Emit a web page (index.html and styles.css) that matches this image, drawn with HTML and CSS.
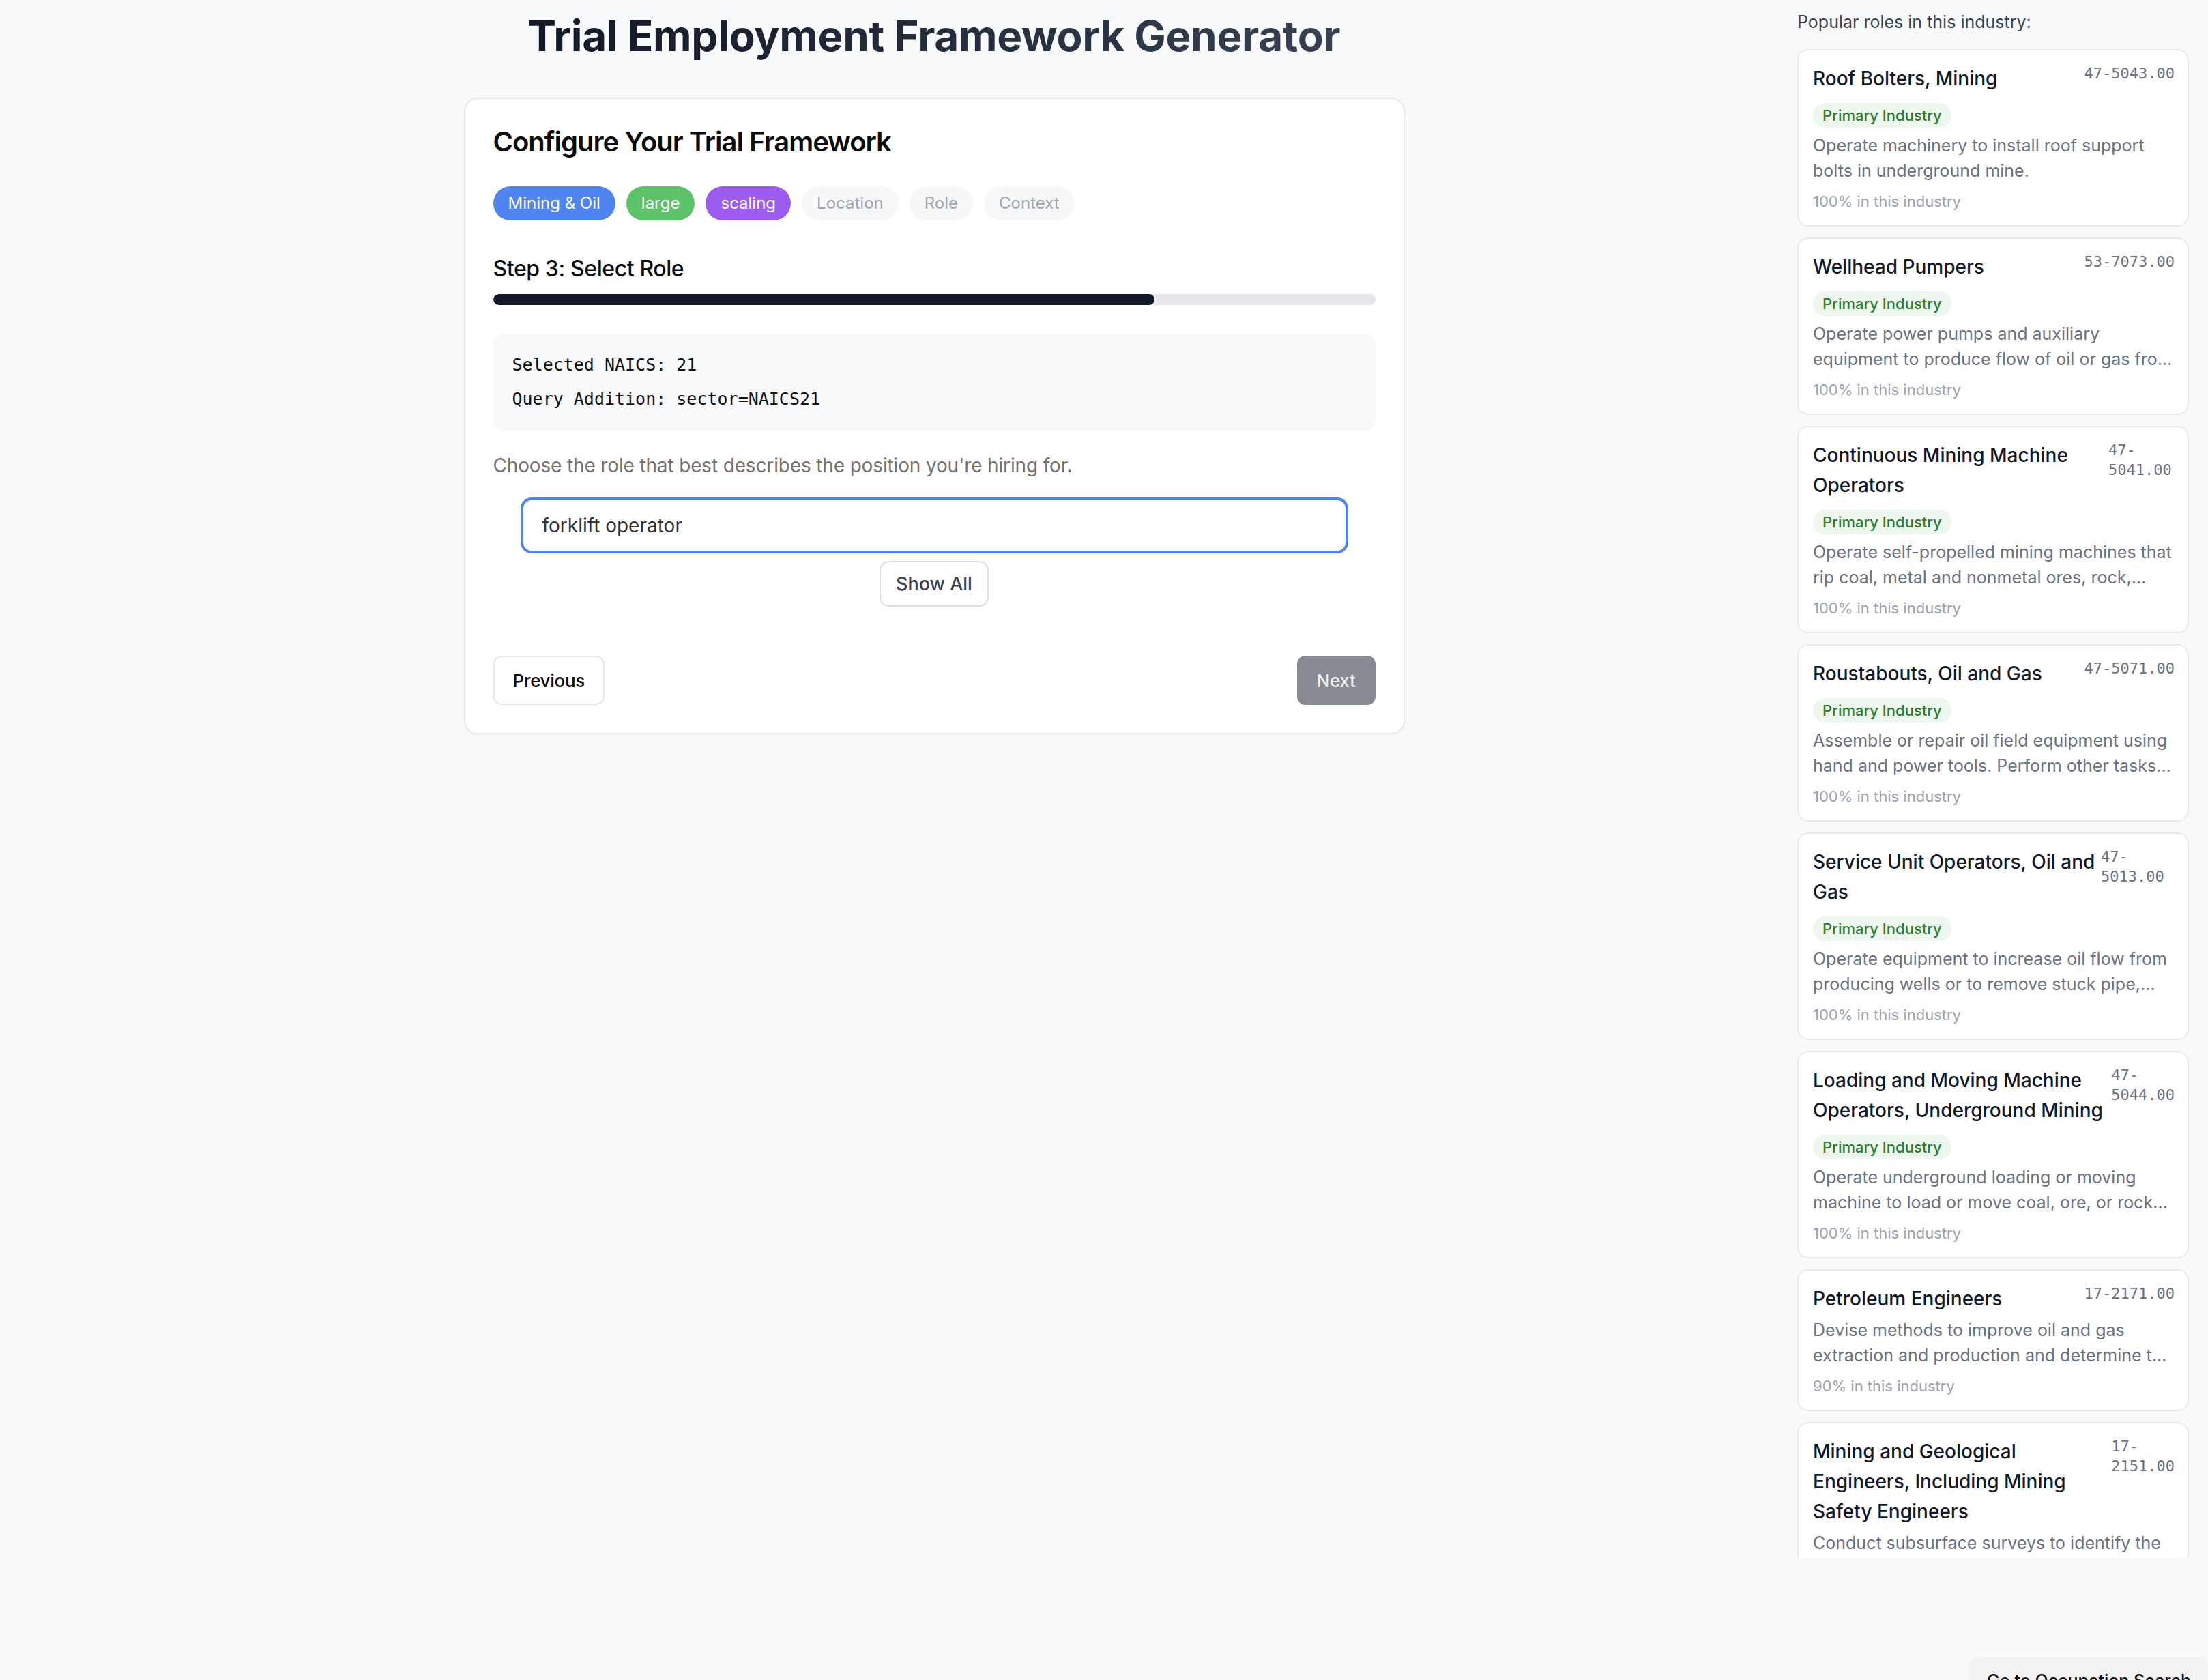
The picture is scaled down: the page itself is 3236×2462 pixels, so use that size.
FILE: index.html
```html
<!DOCTYPE html>
<html lang="en">
<head>
<meta charset="utf-8">
<title>Trial Employment Framework Generator</title>
<link rel="stylesheet" href="styles.css">
</head>
<body>
<div class="layout">
  <main class="main">
    <h1 class="page-title">Trial Employment Framework Generator</h1>
    <section class="card">
      <h2 class="card-title">Configure Your Trial Framework</h2>
      <div class="tags">
        <span class="tag tag-blue">Mining &amp; Oil</span>
        <span class="tag tag-green">large</span>
        <span class="tag tag-purple">scaling</span>
        <span class="tag tag-empty">Location</span>
        <span class="tag tag-empty">Role</span>
        <span class="tag tag-empty">Context</span>
      </div>
      <h3 class="step-title">Step 3: Select Role</h3>
      <div class="progress"><div class="progress-fill" style="width:75%"></div></div>
      <div class="info">
        <div class="info-line">Selected NAICS: 21</div>
        <div class="info-line">Query Addition: sector=NAICS21</div>
      </div>
      <p class="hint">Choose the role that best describes the position you're hiring for.</p>
      <div class="search">
        <input class="search-input" type="text" value="forklift operator">
        <button class="show-all" type="button">Show All</button>
      </div>
      <div class="nav">
        <button class="btn btn-prev" type="button">Previous</button>
        <button class="btn btn-next" type="button">Next</button>
      </div>
    </section>
  </main>
  <aside class="sidebar">
    <div class="sidebar-heading">Popular roles in this industry:</div>
    <div class="role-list">
      <div class="role-card">
        <div class="role-head"><div class="role-title">Roof Bolters, Mining</div><div class="role-code">47-5043.00</div></div>
        <span class="badge">Primary Industry</span>
        <div class="role-desc">Operate machinery to install roof support bolts in underground mine.</div>
        <div class="role-share">100% in this industry</div>
      </div>
      <div class="role-card">
        <div class="role-head"><div class="role-title">Wellhead Pumpers</div><div class="role-code">53-7073.00</div></div>
        <span class="badge">Primary Industry</span>
        <div class="role-desc">Operate power pumps and auxiliary equipment to produce flow of oil or gas from wells in oil field.</div>
        <div class="role-share">100% in this industry</div>
      </div>
      <div class="role-card">
        <div class="role-head"><div class="role-title">Continuous Mining Machine Operators</div><div class="role-code">47-5041.00</div></div>
        <span class="badge">Primary Industry</span>
        <div class="role-desc">Operate self-propelled mining machines that rip coal, metal and nonmetal ores, rock, stone, or sand from the mine face and load it onto conveyors or into shuttle cars in a continuous operation.</div>
        <div class="role-share">100% in this industry</div>
      </div>
      <div class="role-card">
        <div class="role-head"><div class="role-title">Roustabouts, Oil and Gas</div><div class="role-code">47-5071.00</div></div>
        <span class="badge">Primary Industry</span>
        <div class="role-desc">Assemble or repair oil field equipment using hand and power tools. Perform other tasks as needed during regular workday.</div>
        <div class="role-share">100% in this industry</div>
      </div>
      <div class="role-card">
        <div class="role-head"><div class="role-title">Service Unit Operators, Oil and Gas</div><div class="role-code">47-5013.00</div></div>
        <span class="badge">Primary Industry</span>
        <div class="role-desc">Operate equipment to increase oil flow from producing wells or to remove stuck pipe, casing, tools, or other obstructions from drilling wells.</div>
        <div class="role-share">100% in this industry</div>
      </div>
      <div class="role-card">
        <div class="role-head"><div class="role-title">Loading and Moving Machine Operators, Underground Mining</div><div class="role-code">47-5044.00</div></div>
        <span class="badge">Primary Industry</span>
        <div class="role-desc">Operate underground loading or moving machine to load or move coal, ore, or rock into shuttle or mine car or onto conveyors.</div>
        <div class="role-share">100% in this industry</div>
      </div>
      <div class="role-card">
        <div class="role-head"><div class="role-title">Petroleum Engineers</div><div class="role-code">17-2171.00</div></div>
        <div class="role-desc">Devise methods to improve oil and gas extraction and production and determine the need for new or modified tool designs.</div>
        <div class="role-share">90% in this industry</div>
      </div>
      <div class="role-card">
        <div class="role-head"><div class="role-title">Mining and Geological Engineers, Including Mining Safety Engineers</div><div class="role-code">17-2151.00</div></div>
        <div class="role-desc">Conduct subsurface surveys to identify the characteristics of potential land or mining development sites.</div>
        <div class="role-share">90% in this industry</div>
      </div>
    </div>
  </aside>
</div>
<button class="occupation-btn" type="button">Go to Occupation Search</button>
</body>
</html>
```
FILE: styles.css
```css
* { box-sizing: border-box; }

body {
  margin: 0;
  background: #f8f9fa;
  font-family: Inter, "Noto Sans", sans-serif;
  color: #111827;
}

.layout {
  display: flex;
  height: 2462px;
  overflow: hidden;
}

.main {
  flex: 1;
  padding: 16px 0 0 104px;
  display: flex;
  flex-direction: column;
  align-items: center;
}

.page-title {
  margin: 0;
  font-size: 62px;
  line-height: 74px;
  font-weight: 700;
  letter-spacing: -0.3px;
  background: linear-gradient(90deg, #111827 0%, #374151 100%);
  -webkit-background-clip: text;
  background-clip: text;
  color: transparent;
}

.card {
  margin-top: 53px;
  width: 1379px;
  background: #fff;
  border: 2px solid #e8e9ec;
  border-radius: 20px;
  padding: 39px 41px 41px;
  box-shadow: 0 2px 4px rgba(0, 0, 0, 0.03);
}

.card-title {
  margin: 0 0 41px;
  font-size: 40px;
  line-height: 48px;
  font-weight: 600;
  letter-spacing: -1px;
  color: #0a0a0a;
}

.tags {
  display: flex;
  gap: 16px;
  margin-bottom: 51px;
}

.tag {
  height: 50px;
  padding: 0 22px;
  border-radius: 25px;
  font-size: 24px;
  line-height: 50px;
  color: #fff;
}

.tag-blue { background: #5084ee; }
.tag-green { background: #5ec26b; }
.tag-purple { background: #9d5cee; }
.tag-empty { background: #f6f7f9; color: #a2a5ae; }

.step-title {
  margin: 0 0 17px;
  font-size: 32px;
  line-height: 40px;
  font-weight: 500;
  letter-spacing: -0.4px;
  color: #0a0a0a;
}

.progress {
  height: 16px;
  background: #e5e7eb;
  border-radius: 8px;
  overflow: hidden;
  margin-bottom: 42px;
}

.progress-fill {
  height: 100%;
  background: #111827;
  border-radius: 8px;
}

.info {
  background: #f8f9fa;
  border-radius: 16px;
  padding: 21px 28px 22px;
  font-family: "DejaVu Sans Mono", "Liberation Mono", monospace;
  font-size: 25px;
  line-height: 50px;
  color: #111;
}

.hint {
  margin: 33px 0 30px;
  font-size: 28px;
  line-height: 34px;
  letter-spacing: -0.15px;
  color: #78716c;
}

.search {
  padding: 0 40px;
  display: flex;
  flex-direction: column;
  align-items: center;
  gap: 11px;
}

.search-input {
  width: 100%;
  height: 82px;
  border: 4px solid #4f83ee;
  border-radius: 16px;
  padding: 0 28px;
  font-family: Inter, "Noto Sans", sans-serif;
  font-size: 28px;
  color: #333;
  background: #fff;
  outline: none;
}

.show-all {
  width: 160px;
  height: 67px;
  background: #fff;
  border: 2px solid #dcdde1;
  border-radius: 14px;
  font-family: Inter, "Noto Sans", sans-serif;
  font-size: 27px;
  font-weight: 500;
  color: #374151;
}

.nav {
  margin-top: 72px;
  display: flex;
  justify-content: space-between;
}

.btn {
  height: 72px;
  padding: 0 27px;
  border-radius: 12px;
  font-family: Inter, "Noto Sans", sans-serif;
  font-size: 26px;
  font-weight: 500;
  letter-spacing: -0.3px;
}

.btn-prev {
  background: #fff;
  border: 2px solid #e7e8eb;
  color: #0a0a0a;
}

.btn-next {
  background: #888a93;
  border: 2px solid #888a93;
  color: #eeeff1;
}

/* Sidebar */
.sidebar {
  width: 602px;
  flex-shrink: 0;
  padding: 14px 28px 0 0;
}

.sidebar-heading {
  font-size: 25px;
  line-height: 36px;
  color: #3b4250;
}

.role-list {
  margin-top: 22px;
  height: 2211px;
  overflow: hidden;
  display: flex;
  flex-direction: column;
  gap: 16px;
}

.role-card {
  flex-shrink: 0;
  background: #fff;
  border: 2px solid #e9eaee;
  border-radius: 16px;
  padding: 19px 19px 18px 21px;
}

.role-head {
  display: flex;
  justify-content: space-between;
  align-items: flex-start;
  gap: 4px;
  margin-bottom: 6px;
}

.role-title {
  font-size: 28px;
  line-height: 44px;
  font-weight: 500;
  color: #111827;
}

.role-code {
  flex-shrink: 1.6;
  font-family: "DejaVu Sans Mono", "Liberation Mono", monospace;
  font-size: 22px;
  line-height: 29px;
  color: #6b7280;
}

.badge {
  display: inline-block;
  margin: 8px 0 8px;
  height: 36px;
  padding: 0 14px;
  border-radius: 18px;
  background: #edf7ee;
  color: #2e7d32;
  font-size: 22px;
  line-height: 36px;
  font-weight: 500;
}

.role-desc {
  font-size: 25px;
  line-height: 36.5px;
  color: #6b7280;
  display: -webkit-box;
  -webkit-line-clamp: 2;
  -webkit-box-orient: vertical;
  overflow: hidden;
}

.role-share {
  margin-top: 11px;
  font-size: 22px;
  line-height: 33px;
  color: #9ca3af;
}

.occupation-btn {
  position: fixed;
  left: 2884px;
  top: 2428px;
  padding: 18px 28px;
  border: none;
  border-radius: 16px;
  background: #f3f3f2;
  font-family: Inter, "Noto Sans", sans-serif;
  font-size: 25px;
  line-height: 34px;
  font-weight: 500;
  color: #111;
  white-space: nowrap;
}
```
